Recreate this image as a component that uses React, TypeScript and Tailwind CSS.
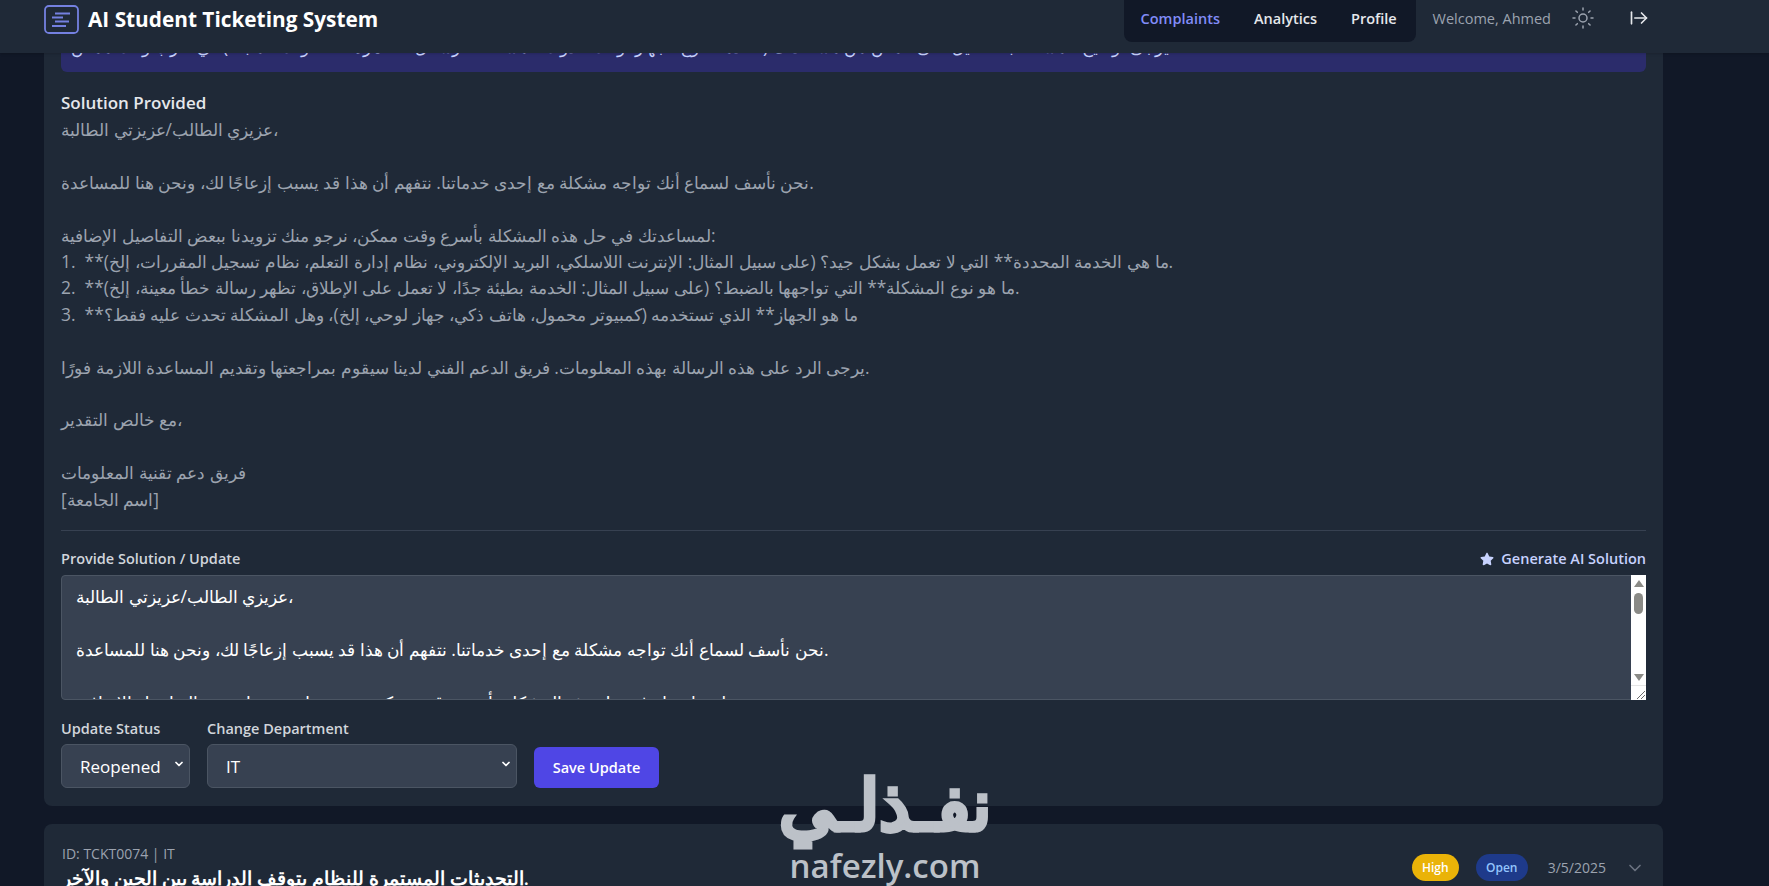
import { ArrowRightFromLine, ChevronDown, Sun } from 'lucide-react';
import { FaStar } from 'react-icons/fa';

const SOLUTION = `عزيزي الطالب/عزيزتي الطالبة،

نحن نأسف لسماع أنك تواجه مشكلة مع إحدى خدماتنا. نتفهم أن هذا قد يسبب إزعاجًا لك، ونحن هنا للمساعدة.

لمساعدتك في حل هذه المشكلة بأسرع وقت ممكن، نرجو منك تزويدنا ببعض التفاصيل الإضافية:
1.  **ما هي الخدمة المحددة** التي لا تعمل بشكل جيد؟ (على سبيل المثال: الإنترنت اللاسلكي، البريد الإلكتروني، نظام إدارة التعلم، نظام تسجيل المقررات، إلخ).
2.  **ما هو نوع المشكلة** التي تواجهها بالضبط؟ (على سبيل المثال: الخدمة بطيئة جدًا، لا تعمل على الإطلاق، تظهر رسالة خطأ معينة، إلخ).
3.  **ما هو الجهاز** الذي تستخدمه (كمبيوتر محمول، هاتف ذكي، جهاز لوحي، إلخ)، وهل المشكلة تحدث عليه فقط؟

يرجى الرد على هذه الرسالة بهذه المعلومات. فريق الدعم الفني لدينا سيقوم بمراجعتها وتقديم المساعدة اللازمة فورًا.

مع خالص التقدير،

فريق دعم تقنية المعلومات
[اسم الجامعة]`;

// ─── Barra superior ───────────────────────────────────────────────────────────
function Header() {
  return (
    <header className="relative z-10 flex h-[53px] shrink-0 items-start justify-between bg-[#1f2937] pl-[44px] pr-[120px] shadow-sm">
      <div className="flex items-center gap-[9px] pt-[4px]">
        <svg viewBox="0 0 35 29" className="h-[29px] w-[35px]" fill="none" stroke="#7480e0">
          <rect x="1" y="1" width="33" height="27" rx="4" strokeWidth="1.8" />
          <path d="M11 8.5h15M8 12.5h11M11 16.5h14M8 21h14" strokeWidth="2" />
        </svg>
        <span className="text-[20.8px] font-bold text-white">AI Student Ticketing System</span>
      </div>

      <div className="flex items-start">
        <nav className="flex h-[42px] w-[292px] items-center gap-[34px] rounded-b-lg bg-[#111827] pb-[4px] pl-[17px] text-[14.5px] font-semibold">
          <span className="text-[#818cf8]">Complaints</span>
          <span className="text-[#e5e7eb]">Analytics</span>
          <span className="text-[#e5e7eb]">Profile</span>
        </nav>
        <span className="ml-[17px] mt-[8px] text-[14.5px] text-[#9ca3af]">Welcome, Ahmed</span>
        <Sun className="ml-[20px] mt-[6px] h-6 w-6 text-[#9ca3af]" strokeWidth={1.5} />
        <ArrowRightFromLine className="ml-[34px] mt-[8px] h-5 w-5 text-[#e5e7eb]" strokeWidth={2} />
      </div>
    </header>
  );
}

// ─── Select con flecha pequeña ────────────────────────────────────────────────
function FieldSelect({ label, value, width, options }: { label: string; value: string; width: string; options: string[] }) {
  return (
    <div>
      <label className="mb-[4px] block text-[14.5px] font-semibold leading-[22px] text-[#d1d5db]">{label}</label>
      <div className={`relative ${width}`}>
        <select
          defaultValue={value}
          className="h-[44px] w-full appearance-none rounded-md border border-[#4b5563] bg-[#374151] pl-[18px] pt-[2px] text-[17px] text-white"
        >
          {options.map((o) => (
            <option key={o}>{o}</option>
          ))}
        </select>
        <ChevronDown className="pointer-events-none absolute right-[5px] top-[14px] h-[12px] w-[12px] text-white" strokeWidth={3.5} />
      </div>
    </div>
  );
}

// ─── Barra de scroll del textarea ─────────────────────────────────────────────
function FakeScrollbar() {
  return (
    <div className="pointer-events-none absolute bottom-0 right-0 top-0 flex w-[15px] flex-col items-center bg-white pt-[5px]">
      <div className="h-0 w-0 border-x-[5px] border-b-[7px] border-x-transparent border-b-[#8a8a86]" />
      <div className="mt-[6px] h-[21px] w-[9px] rounded-full bg-[#8a8a86]" />
      <div className="mt-auto h-0 w-0 border-x-[5px] border-t-[7px] border-x-transparent border-t-[#8a8a86]" />
      <div className="mt-[4px] flex h-[15px] w-full items-end justify-end border-t border-[#e5e5e5]">
        <svg viewBox="0 0 10 10" className="h-[10px] w-[10px]" stroke="#6b6b6b" strokeWidth="1">
          <path d="M1 9 9 1M5 9l4-4" />
        </svg>
      </div>
    </div>
  );
}

// ─── Tarjeta abierta ──────────────────────────────────────────────────────────
function OpenCard() {
  return (
    <section className="rounded-b-lg bg-[#1f2937] px-[17px] pb-[18px]">
      <div className="h-[19px] overflow-hidden rounded-b-md bg-[#312e81]/70">
        <p className="-mt-[20px] whitespace-nowrap px-[10px] text-[17.45px] leading-[26px] text-[#c7d2fe]">
          يرجى توضيح المشكلة بالتفصيل حتى نتمكن من مساعدتك (الخدمة، نوع الجهاز، وقت حدوث المشكلة، الرسائل الظاهرة، الخطوات المتبعة) في أقرب وقت ممكن.
        </p>
      </div>

      <h3 className="mt-[17px] text-[17px] font-semibold leading-[27px] text-[#e5e7eb]">Solution Provided</h3>
      <p className="whitespace-pre-wrap text-[17.45px] leading-[26.4px] text-[#9ca3af]">{SOLUTION}</p>

      <div className="mt-[18px] border-t border-[#374151] pt-[18px]">
        <div className="mb-[6px] flex items-center justify-between">
          <label className="text-[14.5px] font-semibold leading-[20px] text-[#d1d5db]">Provide Solution / Update</label>
          <button className="flex items-center gap-[7px] text-[14.5px] font-semibold leading-[20px] text-[#c7d2fe]">
            <FaStar className="h-[14px] w-[14px]" />
            Generate AI Solution
          </button>
        </div>
        <div className="relative">
          <textarea
            readOnly
            rows={4}
            value={SOLUTION}
            className="block h-[125px] w-full overflow-hidden rounded-sm border border-[#4b5563] bg-[#374151] px-[14px] py-[7px] text-[17.4px] leading-[26.4px] text-white"
          />
          <FakeScrollbar />
        </div>

        <div className="mt-[18px] flex items-end gap-[17px]">
          <FieldSelect label="Update Status" value="Reopened" width="w-[129px]" options={['Reopened', 'Open', 'Closed']} />
          <FieldSelect label="Change Department" value="IT" width="w-[310px]" options={['IT', 'Finance', 'Registrar']} />
          <button className="h-[41px] w-[125px] rounded-md bg-[#4f46e5] pt-[1px] text-[14.5px] font-semibold text-white">
            Save Update
          </button>
        </div>
      </div>
    </section>
  );
}

// ─── Tarjeta cerrada ──────────────────────────────────────────────────────────
function ClosedCard() {
  return (
    <section className="mt-[18px] flex items-start justify-between rounded-t-lg bg-[#1f2937] px-[18px] pt-[20px]">
      <div>
        <p className="text-sm leading-[20px] text-[#9ca3af]">ID: TCKT0074 | IT</p>
        <h3 className="text-[18.6px] font-semibold leading-[28px] text-white">
          التحديثات المستمرة للنظام بتوقف الدراسة بين الحين والآخر.
        </h3>
      </div>
      <div className="mt-[10px] flex items-center">
        <span className="flex h-[27px] w-[47px] items-center justify-center rounded-full bg-[#eab308] text-xs font-semibold text-white">
          High
        </span>
        <span className="ml-[17px] flex h-[27px] w-[52px] items-center justify-center rounded-full bg-[#1e3a8a] text-xs font-semibold text-[#93c5fd]">
          Open
        </span>
        <span className="ml-[20px] text-sm text-[#9ca3af]">3/5/2025</span>
        <ChevronDown className="ml-[19px] h-5 w-5 text-[#6b7280]" />
      </div>
    </section>
  );
}

export default function App() {
  return (
    <div className="relative flex h-[886px] flex-col overflow-hidden bg-[#111827] font-['Open_Sans',sans-serif]">
      <Header />
      <main className="flex-1 overflow-hidden pl-[44px] pr-[106px]">
        <OpenCard />
        <ClosedCard />
      </main>

      {/* Marca de agua */}
      <div className="pointer-events-none absolute left-[770px] top-[765px] z-20 flex w-[230px] flex-col items-center text-[#bcc1c8]">
        <span className="text-[70px] font-bold leading-[76px] [-webkit-text-stroke:3px_#bcc1c8]">نفـذلـي</span>
        <span className="mt-[5px] text-[33px] font-semibold leading-[40px]">nafezly.com</span>
      </div>
    </div>
  );
}
